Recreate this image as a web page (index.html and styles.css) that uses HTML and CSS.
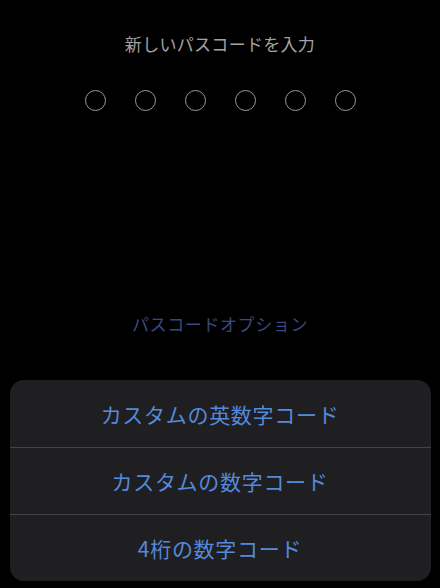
FILE: index.html
```html
<!DOCTYPE html>
<html lang="ja">
<head>
<meta charset="utf-8">
<link rel="stylesheet" href="styles.css">
</head>
<body>
<div class="screen">
  <div class="title">新しいパスコードを入力</div>
  <div class="dots">
    <span class="dot"></span><span class="dot"></span><span class="dot"></span>
    <span class="dot"></span><span class="dot"></span><span class="dot"></span>
  </div>
  <div class="options">パスコードオプション</div>
  <div class="sheet">
    <div class="row">カスタムの英数字コード</div>
    <div class="row">カスタムの数字コード</div>
    <div class="row">4桁の数字コード</div>
  </div>
</div>
</body>
</html>
```
FILE: styles.css
```css
html, body {
  margin: 0;
  padding: 0;
  background: #000;
}
.screen {
  width: 440px;
  height: 588px;
  display: flex;
  flex-direction: column;
  align-items: center;
  font-family: "Noto Sans CJK JP", "Noto Sans", sans-serif;
  overflow: hidden;
}
.title {
  margin-top: 32px;
  height: 24px;
  line-height: 24px;
  font-size: 17px;
  color: #a3a3a3;
  letter-spacing: 0.3px;
}
.dots {
  margin-top: 34px;
  display: flex;
  gap: 29px;
}
.dot {
  width: 19px;
  height: 19px;
  border: 1.5px solid #9c9c9c;
  border-radius: 50%;
}
.options {
  margin-top: 200px;
  height: 26px;
  line-height: 26px;
  font-size: 17px;
  color: #3a4a7e;
  letter-spacing: 0.6px;
}
.sheet {
  margin-top: 43px;
  width: 421px;
  background: #1f1f21;
  border-radius: 14px;
  display: flex;
  flex-direction: column;
}
.row {
  height: 67px;
  display: flex;
  align-items: center;
  justify-content: center;
  font-size: 21px;
  color: #5589dc;
  letter-spacing: 0.7px;
}
.row + .row {
  border-top: 1px solid #444446;
  height: 66px;
}
```
